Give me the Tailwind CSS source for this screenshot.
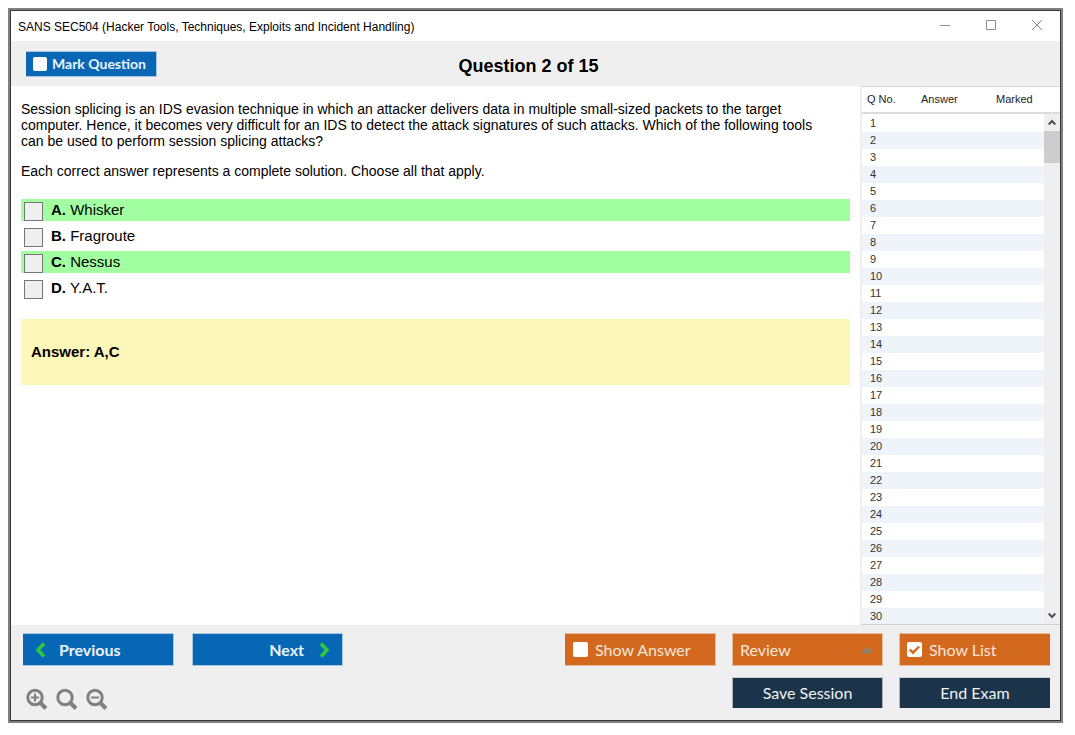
<!DOCTYPE html>
<html lang="en">
<head>
<meta charset="utf-8">
<meta name="viewport" content="width=device-width, initial-scale=1">
<title>SANS SEC504 Practice Exam</title>
<script src="https://cdn.jsdelivr.net/npm/@tailwindcss/browser@4"></script>
</head>
<body class="h-screen bg-white pt-2 pl-2 pr-3 pb-3 font-['Liberation_Sans',Arial,sans-serif] text-black">
<div class="h-full border-2 border-[#808080]">
<div class="flex h-full flex-col border border-[#383838] bg-[#efefef]">

  <header class="flex h-[30px] shrink-0 items-center justify-between bg-white pl-[7px] pr-[15px]">
    <span class="pt-px text-xs">SANS SEC504 (Hacker Tools, Techniques, Exploits and Incident Handling)</span>
    <div class="flex gap-[30px] text-[#8c8c8c]">
      <button type="button" aria-label="Minimize" class="size-4"><svg viewBox="0 0 16 16" class="size-4" fill="none" stroke="currentColor"><path d="M3 7.500h10"/></svg></button>
      <button type="button" aria-label="Maximize" class="size-4"><svg viewBox="0 0 16 16" class="size-4" fill="none" stroke="currentColor"><path d="M3.500 2.500h9v9h-9z"/></svg></button>
      <button type="button" aria-label="Close" class="size-4"><svg viewBox="0 0 16 16" class="size-4" fill="none" stroke="currentColor"><path d="M3 2l10 10M13 2L3 12"/></svg></button>
    </div>
  </header>

  <div class="grid h-[45px] shrink-0 grid-cols-[1fr_auto_1fr] items-center pl-[15px] pr-[29px]">
    <label class="flex h-[26px] w-[131px] items-center gap-[5px] border border-l-0 border-[#a9c8e2] bg-[#0867b5] pl-[7px] font-[Lato,sans-serif] text-[14px] font-bold text-[#eaf3fb]">
      <input type="checkbox" class="size-[14px] appearance-none rounded-xs bg-white">Mark Question
    </label>
    <h1 class="pt-1 text-lg font-bold">Question 2 of 15</h1>
  </div>

  <main class="flex min-h-0 flex-1 bg-white">
    <section class="flex-1 px-[10px] pt-[15px] text-[15px] leading-4">
      <div class="text-[14px] leading-4">
        <p>Session splicing is an IDS evasion technique in which an attacker delivers data in multiple small-sized packets to the target<br>computer. Hence, it becomes very difficult for an IDS to detect the attack signatures of such attacks. Which of the following tools<br>can be used to perform session splicing attacks?</p>
        <p class="mt-[14px]">Each correct answer represents a complete solution. Choose all that apply.</p>
      </div>
      <div class="mt-5 flex flex-col gap-1">
        <label class="flex h-[22px] items-end gap-2 bg-[#a1ffa1] pl-[3px]"><input type="checkbox" class="size-[19px] appearance-none border border-[#767676] bg-[#efefef]"><span class="self-center"><b>A.</b> Whisker</span></label>
        <label class="flex h-[22px] items-end gap-2 pl-[3px]"><input type="checkbox" class="size-[19px] appearance-none border border-[#767676] bg-[#efefef]"><span class="self-center"><b>B.</b> Fragroute</span></label>
        <label class="flex h-[22px] items-end gap-2 bg-[#a1ffa1] pl-[3px]"><input type="checkbox" class="size-[19px] appearance-none border border-[#767676] bg-[#efefef]"><span class="self-center"><b>C.</b> Nessus</span></label>
        <label class="flex h-[22px] items-end gap-2 pl-[3px]"><input type="checkbox" class="size-[19px] appearance-none border border-[#767676] bg-[#efefef]"><span class="self-center"><b>D.</b> Y.A.T.</span></label>
      </div>
      <p class="mt-5 bg-[#fef7ba] px-[10px] py-[25px] font-bold">Answer: A,C</p>
    </section>

    <aside class="flex w-[200px] shrink-0 flex-col border-y border-b-[#d0d0d0] border-t-[#d8d8d8] border-l-2 border-l-[#efefef] text-[11px]">
      <div class="flex h-[27px] shrink-0 items-center border-b-2 border-[#dcdcdc] text-[#222]">
        <span class="w-[55px] pl-[5px]">Q No.</span><span class="w-[75px] pl-1">Answer</span><span class="pl-1">Marked</span>
      </div>
      <div class="flex min-h-0 flex-1">
        <div class="flex-1 overflow-hidden pt-px">
          <table class="w-full text-[#333]" aria-label="Question list">
            <tbody id="rows"></tbody>
          </table>
        </div>
        <div class="flex w-4 flex-col bg-[#efefef] text-[#505050]">
          <button type="button" aria-label="Scroll up" class="grid h-[17px] w-4 place-items-center"><svg viewBox="0 0 8 7" class="h-[7px] w-2" fill="none" stroke="currentColor" stroke-width="2"><path d="M.7 5.500L4 2l3.300 3.500"/></svg></button>
          <div class="h-8 bg-[#cdcdcd]"></div>
          <button type="button" aria-label="Scroll down" class="mt-auto grid h-[17px] w-4 place-items-center"><svg viewBox="0 0 8 7" class="h-[7px] w-2" fill="none" stroke="currentColor" stroke-width="2"><path d="M.7 1.500L4 5l3.300-3.500"/></svg></button>
        </div>
      </div>
    </aside>
  </main>

  <footer class="flex h-[95px] shrink-0 justify-between pl-3 pr-[10px] pt-2 font-[Lato,sans-serif] text-[16px] text-[#f6e6da]">
    <div>
      <div class="flex gap-[18px] font-bold text-[#eaf3fb]">
        <button type="button" class="flex h-[33px] w-[151px] items-center gap-3 border border-l-0 border-[#a9c8e2] bg-[#0867b5] pl-3"><svg viewBox="0 0 12 16" class="h-4 w-3" fill="none" stroke="#2fcb37" stroke-width="3.400"><path d="M9 1.500L3 8l6 6.500"/></svg>Previous</button>
        <button type="button" class="flex h-[33px] w-[151px] items-center justify-end gap-[14px] border border-[#a9c8e2] bg-[#0867b5] pr-3">Next<svg viewBox="0 0 12 16" class="h-4 w-3" fill="none" stroke="#2fcb37" stroke-width="3.400"><path d="M3 1.500L9 8l-6 6.500"/></svg></button>
      </div>
      <div class="mt-[22px] flex gap-2 pl-[3px] text-[#808080]">
        <button type="button" aria-label="Zoom in" class="size-[22px]"><svg viewBox="0 0 22 22" class="size-[22px]" fill="none" stroke="currentColor" stroke-width="3"><circle cx="9" cy="9.500" r="7.200"/><path d="M14 14.500l6 6" stroke-width="4"/><path d="M5 9.500h8M9 5.500v8" stroke-width="2"/></svg></button>
        <button type="button" aria-label="Reset zoom" class="size-[22px]"><svg viewBox="0 0 22 22" class="size-[22px]" fill="none" stroke="currentColor" stroke-width="3"><circle cx="9" cy="9.500" r="7.200"/><path d="M14 14.500l6 6" stroke-width="4"/></svg></button>
        <button type="button" aria-label="Zoom out" class="size-[22px]"><svg viewBox="0 0 22 22" class="size-[22px]" fill="none" stroke="currentColor" stroke-width="3"><circle cx="9" cy="9.500" r="7.200"/><path d="M14 14.500l6 6" stroke-width="4"/><path d="M5 9.500h8" stroke-width="2"/></svg></button>
      </div>
    </div>

    <div class="flex flex-col items-end gap-[11px]">
      <div class="flex gap-4">
        <label class="flex h-[33px] w-[151px] items-center gap-[7px] border border-l-0 border-[#e6bb99] bg-[#d2691e] pl-2"><input type="checkbox" class="size-[15px] appearance-none rounded-xs bg-white">Show Answer</label>
        <div class="grid h-[33px] w-[151px] items-center border border-[#e6bb99] bg-[#d2691e]">
          <select aria-label="Review" class="col-start-1 row-start-1 h-full w-full appearance-none bg-transparent pl-[7px]"><option>Review</option></select>
          <svg viewBox="0 0 12 6" class="pointer-events-none col-start-1 row-start-1 mr-[9px] h-[6px] w-3 justify-self-end"><path d="M6 0l6 6H0z" fill="#8a8178"/></svg>
        </div>
        <label class="flex h-[33px] w-[151px] items-center gap-[7px] border border-r-0 border-[#e6bb99] bg-[#d2691e] pl-[7px]">
          <span class="grid size-[15px]"><input type="checkbox" checked class="peer col-start-1 row-start-1 size-[15px] appearance-none rounded-xs bg-white"><svg viewBox="0 0 15 15" class="pointer-events-none invisible col-start-1 row-start-1 size-[15px] peer-checked:visible" fill="none" stroke="#d2691e" stroke-width="2.400"><path d="M2.800 7.500l3.200 3.200 6.200-6.200"/></svg></span>Show List
        </label>
      </div>
      <div class="flex gap-4 text-[#f0f3f6]">
        <button type="button" class="h-[31px] w-[151px] border border-b-0 border-[#aab4bc] border-t-[#c8d0d2] bg-[#1b344a]">Save Session</button>
        <button type="button" class="h-[31px] w-[151px] border border-b-0 border-r-0 border-[#aab4bc] border-t-[#c8d0d2] bg-[#1b344a]">End Exam</button>
      </div>
    </div>
  </footer>
</div>
</div>
<script>
  const rows = document.getElementById('rows');
  for (let n = 1; n <= 30; n++) {
    rows.insertAdjacentHTML('beforeend',
      '<tr class="h-[17px] leading-[17px] even:bg-[#eef4f9]"><td class="w-[55px] p-0 pl-2">' + n + '</td><td class="p-0"></td><td class="p-0"></td></tr>');
  }
</script>
</body>
</html>
